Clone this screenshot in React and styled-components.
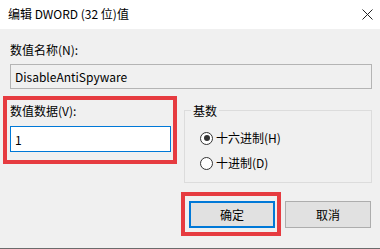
import React from "react";
import styled, { createGlobalStyle } from "styled-components";

const GlobalStyle = createGlobalStyle`
  html, body {
    margin: 0;
    padding: 0;
    background: #f0f0f0;
  }
  * {
    box-sizing: border-box;
  }
`;

const Window = styled.div`
  width: 380px;
  height: 249px;
  background: #f0f0f0;
  border-bottom: 1px solid #6b6b6b;
  font-family: "Noto Sans CJK SC", "Noto Sans", sans-serif;
  font-size: 12px;
  color: #000;
  display: flex;
  flex-direction: column;
`;

const TitleBar = styled.div`
  height: 29px;
  background: #fff;
  display: flex;
  align-items: center;
  justify-content: space-between;
  padding: 0 7px 0 8px;
  flex-shrink: 0;
`;

const Title = styled.span`
  font-size: 12px;
  line-height: 16px;
  margin-top: -1px;
`;

const CloseButton = styled.button`
  background: transparent;
  border: none;
  padding: 0;
  width: 12px;
  height: 12px;
  display: flex;
  align-items: center;
  justify-content: center;
  margin-top: -1px;
  cursor: pointer;
`;

const Body = styled.div`
  padding: 13px 8px 0 3px;
  display: flex;
  flex-direction: column;
`;

const Label = styled.div`
  line-height: 16px;
  height: 16px;
`;

const NameSection = styled.div`
  margin-left: 7px;
  display: flex;
  flex-direction: column;
  gap: 6px;
`;

const TextBox = styled.input`
  height: ${(p) => p.$h || 25}px;
  width: 100%;
  font-family: inherit;
  font-size: 12px;
  padding: 0 4px;
  outline: none;
  border: 1px solid ${(p) => (p.$focused ? "#0078d7" : "#b4b4b4")};
  background: ${(p) => (p.readOnly ? "#f0f0f0" : "#fff")};
  color: #000;
`;

const MiddleRow = styled.div`
  margin-top: 7px;
  display: grid;
  grid-template-columns: 174px 188px;
  column-gap: 7px;
  align-items: start;
`;

const Highlight = styled.div`
  border: 4px solid #e63b40;
  padding: ${(p) => p.$pad};
  display: flex;
  flex-direction: column;
  gap: ${(p) => p.$gap || 0}px;
`;

const GroupBox = styled.div`
  position: relative;
  margin-top: 14px;
  height: 73px;
  border: 1px solid #dcdcdc;
  padding: 19px 6px 0 15px;
  display: flex;
  flex-direction: column;
  gap: 9px;
`;

const GroupTitle = styled.span`
  position: absolute;
  top: -8px;
  left: 6px;
  padding: 0 2px;
  line-height: 16px;
  background: #f0f0f0;
`;

const RadioRow = styled.label`
  display: flex;
  align-items: center;
  gap: 3px;
  height: 16px;
  line-height: 16px;
`;

const RadioCircle = styled.span`
  width: 13px;
  height: 13px;
  border-radius: 50%;
  border: 1px solid #333;
  background: #fff;
  display: flex;
  align-items: center;
  justify-content: center;
  flex-shrink: 0;
  &::after {
    content: "";
    width: 6px;
    height: 6px;
    border-radius: 50%;
    background: ${(p) => (p.$checked ? "#333" : "transparent")};
  }
`;

const ButtonRow = styled.div`
  margin-top: 9px;
  display: flex;
  justify-content: flex-end;
  align-items: center;
  gap: 4px;
  padding-right: 1px;
`;

const Button = styled.button`
  width: 86px;
  height: 27px;
  font-family: inherit;
  font-size: 12px;
  color: #000;
  background: #e1e1e1;
  border: ${(p) => (p.$default ? "2px solid #0078d7" : "1px solid #adadad")};
  padding: 0;
  cursor: pointer;
`;

const App = () => {
  return (
    <>
      <GlobalStyle />
      <Window>
        <TitleBar>
          <Title>编辑 DWORD (32 位)值</Title>
          <CloseButton aria-label="关闭">
            <svg width="11" height="11" viewBox="0 0 11 11">
              <path d="M0.5 0.5 L10.5 10.5 M10.5 0.5 L0.5 10.5" stroke="#222" strokeWidth="1" fill="none" />
            </svg>
          </CloseButton>
        </TitleBar>
        <Body>
          <NameSection>
            <Label>数值名称(N):</Label>
            <TextBox readOnly value="DisableAntiSpyware" />
          </NameSection>
          <MiddleRow>
            <Highlight $pad="3px 2px 8px 3px" $gap={7}>
              <Label>数值数据(V):</Label>
              <TextBox $focused $h={26} defaultValue="1" />
            </Highlight>
            <GroupBox>
              <GroupTitle>基数</GroupTitle>
              <RadioRow>
                <RadioCircle $checked />
                十六进制(H)
              </RadioRow>
              <RadioRow>
                <RadioCircle />
                十进制(D)
              </RadioRow>
            </GroupBox>
          </MiddleRow>
          <ButtonRow>
            <Highlight $pad="5px 2px 4px 4px">
              <Button $default>确定</Button>
            </Highlight>
            <Button>取消</Button>
          </ButtonRow>
        </Body>
      </Window>
    </>
  );
};

export default App;
